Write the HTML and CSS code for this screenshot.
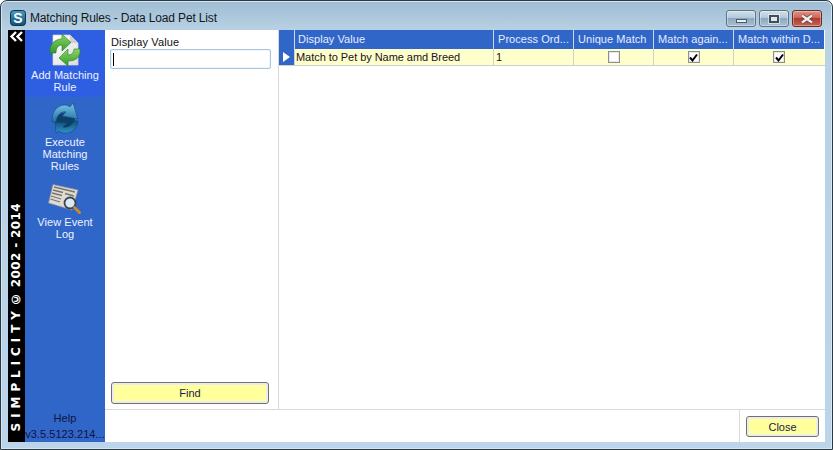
FILE: index.html
```html
<!DOCTYPE html>
<html lang="en">
<head>
<meta charset="utf-8">
<title>Matching Rules - Data Load Pet List</title>
<link rel="stylesheet" href="styles.css">
</head>
<body>
<div class="window">
  <header class="titlebar">
    <svg class="app-icon" width="16" height="16" viewBox="0 0 16 16">
      <defs><linearGradient id="ga" x1="0" y1="0" x2="0" y2="1"><stop offset="0" stop-color="#4a9ac4"/><stop offset="1" stop-color="#0f4f78"/></linearGradient></defs>
      <rect x="0.5" y="0.5" width="15" height="15" rx="3" fill="url(#ga)" stroke="#12303f"/>
      <text x="8" y="13" text-anchor="middle" class="app-s">S</text>
    </svg>
    <span class="title">Matching Rules - Data Load Pet List</span>
    <div class="controls">
      <div class="ctl ctl-min"><span class="glyph-min"></span></div>
      <div class="ctl ctl-max"><span class="glyph-max"></span></div>
      <div class="ctl ctl-close"><svg width="16" height="10" viewBox="0 0 16 10"><path d="M3 1.500 L13 8.500 M13 1.500 L3 8.500" stroke="#5c3a36" stroke-width="3.400" fill="none"/><path d="M3 1.500 L13 8.500 M13 1.500 L3 8.500" stroke="#eeeeee" stroke-width="2.200" fill="none"/></svg></div>
    </div>
  </header>
  <div class="client">
    <aside class="brand">
      <svg class="collapse" width="15" height="11" viewBox="0 0 15 11"><path d="M7 1 L2.500 5.500 L7 10 M13 1 L8.500 5.500 L13 10" stroke="#fff" stroke-width="2.400" fill="none"/></svg>
      <span class="brand-text">S I M P L I C I T Y © 2002 - 2014</span>
    </aside>
    <nav class="sidebar">
      <a class="nav-item nav-active">
        <svg class="nav-icon" width="32" height="33" viewBox="0 0 32 33">
          <defs>
            <linearGradient id="gg" x1="0" y1="0" x2="0" y2="1"><stop offset="0" stop-color="#8fd65e"/><stop offset="1" stop-color="#2f9a30"/></linearGradient>
            <linearGradient id="gd" x1="0" y1="0" x2="1" y2="1"><stop offset="0" stop-color="#ffffff"/><stop offset="1" stop-color="#dcdcdc"/></linearGradient>
          </defs>
          <path d="M4 1 H21 L29 9 V31 H4 Z" fill="url(#gd)" stroke="#d5d5d5" stroke-width="0.700"/>
          <path d="M21 1 V9 H29 Z" fill="#cfcfcf"/>
          <path d="M1 19 C0 10 6 5 13 5 L13 0 L22 8.500 L13 17 L13 11 C9 11 7 14 7 19 Z" fill="url(#gg)" stroke="#257a28" stroke-width="0.600"/>
          <path d="M31 15 C32 24 26 27 19 27 L19 32 L10 24 L19 15 L19 21 C23 21 25 18 25 15 Z" fill="url(#gg)" stroke="#257a28" stroke-width="0.600"/>
        </svg>
        <span>Add Matching<br>Rule</span>
      </a>
      <a class="nav-item nav-exec">
        <svg class="nav-icon" width="30" height="32" viewBox="0 0 30 32">
          <defs>
            <linearGradient id="gb" x1="0" y1="0" x2="0" y2="1"><stop offset="0" stop-color="#7cc6e6"/><stop offset="1" stop-color="#1b6fa6"/></linearGradient>
            <linearGradient id="gc" x1="0" y1="0" x2="0" y2="1"><stop offset="0" stop-color="#0f4f7c"/><stop offset="1" stop-color="#2f93c6"/></linearGradient>
          </defs>
          <ellipse cx="15" cy="19" rx="10" ry="8" fill="#0e3f66"/>
          <path d="M2 20 C1 9 8 3 15 3 C17 3 19 4 20 5 L23 1 L28 17 L12 14 L16 10 C11 9 7 13 6 20 Z" fill="url(#gb)" stroke="#0f4a73" stroke-width="0.600"/>
          <path d="M28 19 C28 27 21 32 14 31 C12 31 10 30 9 29 L6 31 L5 20 L17 21 L13 25 C18 26 22 23 24 19 Z" fill="url(#gc)" stroke="#0f4a73" stroke-width="0.600"/>
        </svg>
        <span>Execute<br>Matching<br>Rules</span>
      </a>
      <a class="nav-item nav-log">
        <svg class="nav-icon" width="34" height="31" viewBox="0 0 34 31">
          <path d="M5 0.500 L30 6 L24 26 L0.500 19 Z" fill="#dedbd4" stroke="#8f8f8f" stroke-width="0.700"/>
          <path d="M6 3 L27 8 M5 6 L15 8.500 M4 9 L14 11.500 M3 12 L13 15 M2.500 15 L12 18 M17 9.500 L26 12" stroke="#7a766f" stroke-width="1.300"/>
          <circle cx="22" cy="19" r="5.500" fill="#d8ebf6" stroke="#38434a" stroke-width="1.800"/>
          <path d="M26.500 23.500 L31.500 28.500" stroke="#c98a2e" stroke-width="3" stroke-linecap="round"/>
        </svg>
        <span>View Event<br>Log</span>
      </a>
      <div class="nav-foot">
        <div>Help</div>
        <div>v3.5.5123.214...</div>
      </div>
    </nav>
    <main class="content">
      <div class="upper">
        <section class="search">
          <label class="field-label" for="dv">Display Value</label>
          <div class="field" id="dv"><span class="caret"></span></div>
          <div class="search-spacer"></div>
          <button class="btn btn-find">Find</button>
        </section>
        <section class="grid">
          <div class="row head">
            <div class="cell c-sel"></div>
            <div class="cell c-name">Display Value</div>
            <div class="cell c-ord">Process Ord...</div>
            <div class="cell c-chk">Unique Match</div>
            <div class="cell c-chk">Match again...</div>
            <div class="cell c-last">Match within D...</div>
          </div>
          <div class="row body-row">
            <div class="cell c-sel"><span class="arrow"></span></div>
            <div class="cell c-name">Match to Pet by Name amd Breed</div>
            <div class="cell c-ord">1</div>
            <div class="cell c-chk center"><span class="check"></span></div>
            <div class="cell c-chk center"><span class="check"><svg width="11" height="11" viewBox="0 0 11 11"><path d="M2 5.500 L4.500 8.500 L9 2.500" stroke="#000" stroke-width="2" fill="none"/></svg></span></div>
            <div class="cell c-last center"><span class="check"><svg width="11" height="11" viewBox="0 0 11 11"><path d="M2 5.500 L4.500 8.500 L9 2.500" stroke="#000" stroke-width="2" fill="none"/></svg></span></div>
          </div>
        </section>
      </div>
      <footer class="footer">
        <div class="footer-btn"><button class="btn btn-close">Close</button></div>
      </footer>
    </main>
  </div>
</div>
</body>
</html>
```

FILE: styles.css
```css
* { box-sizing: border-box; }
html, body { margin: 0; height: 100%; background: #fff; }
body { font-family: "Liberation Sans", Arial, sans-serif; font-size: 11px; letter-spacing: 0.05px; color: #000; overflow: hidden; }

.window {
  width: 833px; height: 450px;
  display: flex; flex-direction: column;
  border: 1px solid #2a3a44;
  border-radius: 7px 7px 0 0;
  background: linear-gradient(180deg, #9fbdd3 0, #b9d1e4 30px, #bcd5ea 100%);
  box-shadow: inset 0 0 0 1px #d7e6f1;
  overflow: hidden;
}
.titlebar {
  height: 29px; flex: none;
  display: flex; align-items: center;
  padding: 4px 5px 0 9px;
}
.app-icon { flex: none; }
.app-s { font-family: "Liberation Sans", sans-serif; font-size: 14px; font-weight: bold; fill: #fff; }
.title { margin-left: 4px; font-size: 12px; letter-spacing: -0.15px; color: #10181f; }
.controls { margin-left: auto; display: flex; gap: 3px; align-self: flex-start; margin-top: 5px; margin-right: 5px; }
.ctl {
  height: 17px; border-radius: 3px; border: 1px solid #5d7487;
  display: flex; align-items: center; justify-content: center;
  background: linear-gradient(180deg, #d3e0ea 0, #b3c8d9 45%, #8ea9bf 50%, #a7c0d2 100%);
  box-shadow: inset 0 0 0 1px rgba(255,255,255,.35);
}
.ctl-min { width: 30px; }
.ctl-max { width: 30px; }
.ctl-close { width: 30px; border-color: #6e2a22; background: linear-gradient(180deg, #dd9488 0, #c9665a 45%, #b03b2c 50%, #c46454 100%); }
.glyph-min { width: 11px; height: 4px; margin-top: 4px; background: #eaf0f4; border: 1px solid #4a5c6b; }
.glyph-max { width: 10px; height: 8px; border: 2px solid #3f4f5c; background: #dfe8ee; box-shadow: 0 0 0 1px rgba(255,255,255,.5); }

.client {
  flex: 1; min-height: 0;
  display: flex;
  margin: 0 7px 7px 7px;
  background: #fff;
}
.brand {
  width: 17px; flex: none; background: #000;
  display: flex; flex-direction: column; align-items: center; justify-content: space-between;
  padding: 0 0 11px;
}
.collapse { margin-top: 1px; flex: none; }
.brand-text {
  writing-mode: vertical-rl; transform: rotate(180deg);
  font-family: "DejaVu Sans", sans-serif; font-weight: bold;
  font-size: 12px; letter-spacing: 0.37px; color: #fff; white-space: nowrap;
  line-height: 17px;
}

.sidebar {
  width: 80px; flex: none; background: #3166c9;
  display: flex; flex-direction: column; align-items: stretch;
  color: #fff; text-align: center; line-height: 12px;
}
.nav-item { display: flex; flex-direction: column; align-items: center; color: #eef2ff; flex: none; }
.nav-active { height: 67px; background: #2e5fe2; padding-top: 4px; }
.nav-exec { padding-top: 5px; height: 81px; }
.nav-log { padding-top: 6px; }
.nav-active .nav-icon { margin-bottom: 2px; }
.nav-exec .nav-icon { margin-bottom: 2px; }
.nav-log .nav-icon { margin-bottom: 1px; }
.nav-foot { margin-top: auto; color: #0c1440; line-height: 16px; padding-bottom: 0; white-space: nowrap; }

.content { flex: 1; min-width: 0; display: flex; flex-direction: column; }
.upper { flex: 1; min-height: 0; display: flex; }
.search {
  width: 174px; flex: none;
  display: flex; flex-direction: column;
  padding: 5px 7px 5px 5px;
  border-right: 1px solid #d9d9d9;
}
.field-label { line-height: 14px; color: #101010; margin-left: 1px; letter-spacing: 0.15px; }
.field {
  height: 20px; border: 1px solid #a5c7e2; border-radius: 2px; background: #fff;
  box-shadow: inset 0 0 0 1px #eef5fa;
  display: flex; align-items: center; padding-left: 2px;
}
.caret { width: 1px; height: 13px; background: #000; }
.search-spacer { flex: 1; }
.btn {
  font: inherit; color: #1a1a50;
  background: #ffff9c;
  border: 1px solid #707070; border-radius: 3px;
  box-shadow: inset 0 0 0 2px #ececec;
  padding: 0;
}
.btn-find { height: 22px; width: 158px; margin-left: 1px; }

.grid { flex: 1; min-width: 0; display: flex; flex-direction: column; }
.row { display: flex; }
.head { height: 19px; background: #3166c9; color: #e6ecff; line-height: 18px; width: 545px; }
.body-row { height: 17px; background: #ffffcc; border-bottom: 1px solid #d0d0d0; line-height: 16px; color: #1a1020; letter-spacing: -0.05px; }
.cell { flex: none; border-right: 1px solid #cfd6e6; padding-left: 3px; white-space: nowrap; overflow: hidden; height: 100%; }
.c-sel { width: 16px; padding: 0; display: flex; align-items: center; justify-content: center; }
.body-row .c-sel { background: #3166c9; border-right-color: #d0d0d0; }
.c-name { width: 199px; padding-left: 3px; }
.body-row .c-name { padding-left: 1px; }
.c-ord { width: 80px; padding-left: 4px; }
.body-row .c-ord { padding-left: 2px; }
.c-chk { width: 80px; padding-left: 4px; }
.c-last { width: 90px; padding-left: 4px; border-right: 0; }
.body-row .cell { border-right-color: #d0d0d0; }
.center { display: flex; align-items: center; justify-content: center; padding: 0; }
.arrow { width: 0; height: 0; border-left: 7px solid #fff; border-top: 5px solid transparent; border-bottom: 5px solid transparent; }
.check { width: 12px; height: 12px; border: 1px solid #8f8f8f; background: #fff; display: flex; align-items: center; justify-content: center; box-shadow: inset 0 0 0 1px #e8e8e8; }
.check svg { display: block; flex: none; }

.footer { height: 33px; flex: none; border-top: 1px solid #d9d9d9; display: flex; justify-content: flex-end; }
.footer-btn { width: 86px; border-left: 1px solid #d9d9d9; padding: 6px 6px 0 6px; }
.btn-close { height: 21px; width: 73px; }
```
